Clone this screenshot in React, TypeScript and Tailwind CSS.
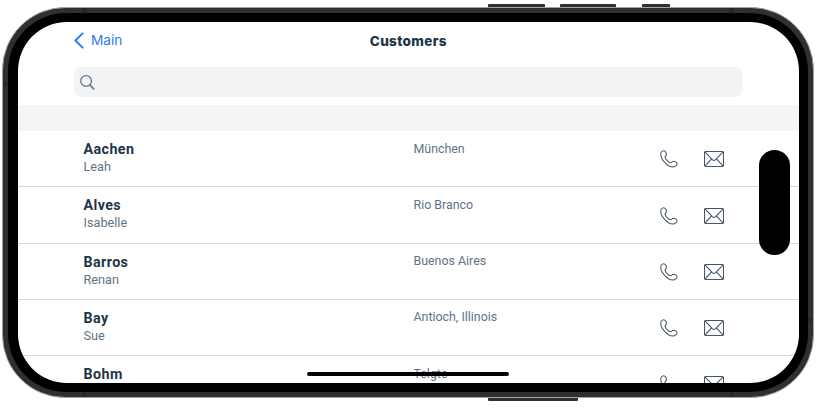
const customers = [
  { last: "Aachen", first: "Leah", city: "München" },
  { last: "Alves", first: "Isabelle", city: "Rio Branco" },
  { last: "Barros", first: "Renan", city: "Buenos Aires" },
  { last: "Bay", first: "Sue", city: "Antioch, Illinois" },
  { last: "Bohm", first: "", city: "Telgte" },
];

function PhoneIcon() {
  return (
    <svg width="18" height="18" viewBox="0 0 18 18" fill="none" stroke="#475569" strokeWidth="1.05" strokeLinejoin="round">
      <path d="M1 2.8 C1.5 1.4 3.5 0.2 4.8 1.2 C5.9 2.1 6.5 3.6 6.5 4.7 C6.5 5.7 5 6 5 7.1 C5.2 9 8.5 12.6 10.7 12.7 C11.9 12.7 12 11.3 13.2 11.3 C14.7 11.2 17 12.2 17.1 13.8 C17.1 15.6 14.8 17 12.8 17 C7.5 17 1 9.5 0.8 4.7 C0.7 4 0.8 3.3 1 2.8Z" />
    </svg>
  );
}

function MailIcon() {
  return (
    <svg width="20" height="16" viewBox="0 0 20 16" fill="none" stroke="#475569" strokeWidth="1.1" strokeLinejoin="round">
      <rect x="0.5" y="0.5" width="19" height="15" rx="1.3" />
      <path d="M1.1 1.2 L8.6 8.8 Q10 10 11.4 8.8 L18.9 1.2 M1.1 14.8 L7.3 8.1 M18.9 14.8 L12.7 8.1" />
    </svg>
  );
}

export default function App() {
  return (
    <div className="flex h-[408px] w-[816px] flex-col overflow-hidden bg-white px-[2px] pt-[4px]">
      <div className="flex h-[3px] shrink-0 pl-[486px]">
        <div className="mr-[15px] h-[4px] w-[57px] shrink-0 rounded-t-[1px] bg-[#303030]" />
        <div className="mr-[26px] h-[4px] w-[56px] shrink-0 rounded-t-[1px] bg-[#303030]" />
        <div className="h-[4px] w-[28px] shrink-0 rounded-t-[1px] bg-[#303030]" />
      </div>

      <div className="relative h-[391px] shrink-0 rounded-[63px] border border-[#a3a3a3] bg-[#303030] p-[5px]">
        <div className="absolute top-0 left-[79px] h-[5px] w-[5px] bg-[#282828]" />
        <div className="absolute top-0 right-[79px] h-[5px] w-[5px] bg-[#282828]" />
        <div className="absolute bottom-0 left-[79px] h-[5px] w-[5px] bg-[#282828]" />
        <div className="absolute right-[79px] bottom-0 h-[5px] w-[5px] bg-[#282828]" />
        <div className="absolute top-[74px] left-0 h-[5px] w-[5px] bg-[#282828]" />
        <div className="absolute right-0 bottom-[74px] h-[5px] w-[5px] bg-[#282828]" />

        <div className="relative h-full w-full rounded-[58px] bg-black pt-[9px] pr-[9px] pb-[9px] pl-[9.5px]">
          <div className="flex h-full w-full flex-col overflow-hidden rounded-[49px] bg-white font-[Roboto,'Noto_Sans',sans-serif]">
            <header className="grid h-[37.5px] shrink-0 grid-cols-3 items-center">
              <button className="flex items-center gap-[7px] pl-[56.5px] font-['Inter',sans-serif] text-[13.7px] leading-none text-[#2b7df6]">
                <svg width="10" height="17" viewBox="0 0 10 17" fill="none" stroke="#2b7df6" strokeWidth="2" strokeLinecap="round" strokeLinejoin="round">
                  <path d="M8.6 1.4 L1.4 8.5 L8.6 15.6" />
                </svg>
                <span className="pt-[1px]">Main</span>
              </button>
              <h1 className="pt-[1px] text-center font-['Inter',sans-serif] text-[13.6px] font-extrabold tracking-[0.3px] text-[#223548]">Customers</h1>
            </header>
            <div className="h-[45.5px] shrink-0 px-[56px] pt-[7.5px]">
              <div className="flex h-[30px] items-center rounded-[8px] bg-[#f2f3f5] pl-[6.5px]">
                <svg width="15" height="16" viewBox="0 0 15 16" fill="none" stroke="#64788c" strokeWidth="1.3" strokeLinecap="round">
                  <circle cx="6.1" cy="7" r="5.4" />
                  <path d="M10 11 L13.6 14.8" strokeWidth="1.7" />
                </svg>
              </div>
            </div>
            <div className="h-[26px] shrink-0 bg-[#f4f5f7]" />
            <ul>
              {customers.map((c) => (
                <li key={c.last} className="flex h-[56.25px] border-b border-[#d5dae0] pl-[66px]">
                  <div className="w-[330px] pt-[8px]">
                    <p className="text-[14.3px] leading-[20px] font-bold tracking-[0.4px] text-[#223548]">{c.last}</p>
                    <p className="text-[12.7px] leading-[16px] text-[#5f7388]">{c.first}</p>
                  </div>
                  <p className="w-[246px] pt-[8.5px] text-[12.4px] leading-[18px] text-[#5f7388]">{c.city}</p>
                  <div className="flex items-center gap-[26px] pt-[1.5px]">
                    <PhoneIcon />
                    <MailIcon />
                  </div>
                </li>
              ))}
            </ul>
          </div>
          <div className="absolute top-[137px] right-[18px] h-[105px] w-[31px] rounded-full bg-black" />
          <div className="absolute right-0 bottom-[16px] left-0 mx-auto h-[4px] w-[202px] rounded-full bg-black" />
        </div>
      </div>

      <div className="flex h-[3px] shrink-0 pl-[486px]">
        <div className="h-[3px] w-[90px] rounded-b-[1px] bg-[#303030]" />
      </div>
    </div>
  );
}
